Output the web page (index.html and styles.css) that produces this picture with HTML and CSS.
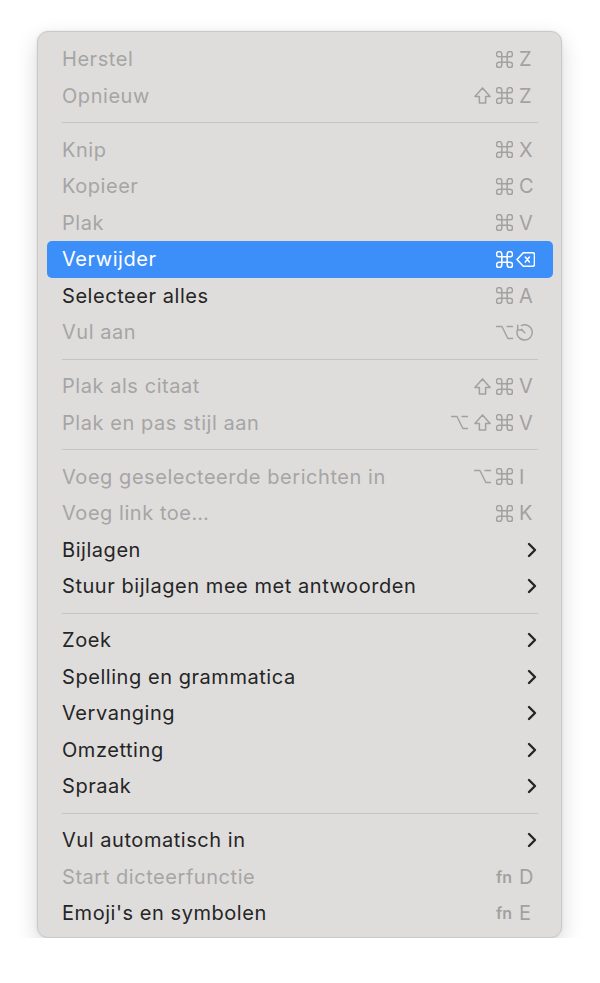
FILE: index.html
```html
<!DOCTYPE html>
<html lang="nl">
<head>
<meta charset="utf-8">
<title>Menu</title>
<link rel="stylesheet" href="styles.css">
</head>
<body>
<svg width="0" height="0" class="defs" aria-hidden="true">
  <defs>
    <symbol id="cmd" viewBox="2.5 2.5 19 19"><path d="M15 6v12a3 3 0 1 0 3-3H6a3 3 0 1 0 3 3V6a3 3 0 1 0-3 3h12a3 3 0 1 0-3-3"/></symbol>
    <symbol id="shift" viewBox="2.5 2.5 19 19"><path d="M8.5 20.5v-7.5H3.5l8.5-9.5 8.5 9.5h-5v7.5z"/></symbol>
    <symbol id="opt" viewBox="1.5 2.5 20 19"><path d="M2 5h6.5l7 14H21M14.5 5H21"/></symbol>
    <symbol id="del" viewBox="1.5 2.5 21 19"><path d="M9.5 4.5H20a2 2 0 0 1 2 2v11a2 2 0 0 1-2 2H9.5L2.5 12z"/><path d="M11.8 9.2l4.6 5.6M16.4 9.2l-4.6 5.6"/></symbol>
    <symbol id="hist" viewBox="2 2 20 20"><path d="M8.2 3.8A9 9 0 1 1 3.6 9"/><path d="M4 3.5v5.5h5.5"/><path d="M12.3 12.3L8.3 8.3"/></symbol>
    <symbol id="chev" viewBox="0 0 10 16"><path d="M2 2l6 6-6 6"/></symbol>
  </defs>
</svg>
<div class="menu">
  <div class="item off"><span class="label">Herstel</span><span class="keys"><span class="mods"><svg class="ic"><use href="#cmd"/></svg></span><span class="k">Z</span></span></div>
  <div class="item off"><span class="label">Opnieuw</span><span class="keys"><span class="mods"><svg class="ic"><use href="#shift"/></svg><svg class="ic"><use href="#cmd"/></svg></span><span class="k">Z</span></span></div>
  <div class="sep"></div>
  <div class="item off"><span class="label">Knip</span><span class="keys"><span class="mods"><svg class="ic"><use href="#cmd"/></svg></span><span class="k">X</span></span></div>
  <div class="item off"><span class="label">Kopieer</span><span class="keys"><span class="mods"><svg class="ic"><use href="#cmd"/></svg></span><span class="k">C</span></span></div>
  <div class="item off"><span class="label">Plak</span><span class="keys"><span class="mods"><svg class="ic"><use href="#cmd"/></svg></span><span class="k">V</span></span></div>
  <div class="item active"><span class="label">Verwijder</span><span class="keys"><span class="mods"><svg class="ic"><use href="#cmd"/></svg></span><span class="k"><svg class="ic wide keyic"><use href="#del"/></svg></span></span></div>
  <div class="item"><span class="label">Selecteer alles</span><span class="keys"><span class="mods"><svg class="ic"><use href="#cmd"/></svg></span><span class="k">A</span></span></div>
  <div class="item off"><span class="label">Vul aan</span><span class="keys"><span class="mods"><svg class="ic"><use href="#opt"/></svg></span><span class="k"><svg class="ic keyic"><use href="#hist"/></svg></span></span></div>
  <div class="sep"></div>
  <div class="item off"><span class="label">Plak als citaat</span><span class="keys"><span class="mods"><svg class="ic"><use href="#shift"/></svg><svg class="ic"><use href="#cmd"/></svg></span><span class="k">V</span></span></div>
  <div class="item off"><span class="label">Plak en pas stijl aan</span><span class="keys"><span class="mods"><svg class="ic"><use href="#opt"/></svg><svg class="ic"><use href="#shift"/></svg><svg class="ic"><use href="#cmd"/></svg></span><span class="k">V</span></span></div>
  <div class="sep"></div>
  <div class="item off"><span class="label">Voeg geselecteerde berichten in</span><span class="keys"><span class="mods"><svg class="ic"><use href="#opt"/></svg><svg class="ic"><use href="#cmd"/></svg></span><span class="k">I</span></span></div>
  <div class="item off"><span class="label">Voeg link toe…</span><span class="keys"><span class="mods"><svg class="ic"><use href="#cmd"/></svg></span><span class="k">K</span></span></div>
  <div class="item"><span class="label">Bijlagen</span><svg class="chev"><use href="#chev"/></svg></div>
  <div class="item"><span class="label">Stuur bijlagen mee met antwoorden</span><svg class="chev"><use href="#chev"/></svg></div>
  <div class="sep"></div>
  <div class="item"><span class="label">Zoek</span><svg class="chev"><use href="#chev"/></svg></div>
  <div class="item"><span class="label">Spelling en grammatica</span><svg class="chev"><use href="#chev"/></svg></div>
  <div class="item"><span class="label">Vervanging</span><svg class="chev"><use href="#chev"/></svg></div>
  <div class="item"><span class="label">Omzetting</span><svg class="chev"><use href="#chev"/></svg></div>
  <div class="item"><span class="label">Spraak</span><svg class="chev"><use href="#chev"/></svg></div>
  <div class="sep"></div>
  <div class="item"><span class="label">Vul automatisch in</span><svg class="chev"><use href="#chev"/></svg></div>
  <div class="item off"><span class="label">Start dicteerfunctie</span><span class="keys"><span class="mods"><span class="fn">fn</span></span><span class="k">D</span></span></div>
  <div class="item"><span class="label">Emoji's en symbolen</span><span class="keys"><span class="mods"><span class="fn">fn</span></span><span class="k">E</span></span></div>
</div>
</body>
</html>
```

FILE: styles.css
```css
html, body {
  margin: 0;
  padding: 0;
  background: #ffffff;
}

body {
  padding: 31px 0 0 37px;
  font-family: Inter, "Noto Sans", "Liberation Sans", sans-serif;
}

.defs {
  position: absolute;
  width: 0;
  height: 0;
  overflow: hidden;
}

.menu {
  box-sizing: border-box;
  width: 525px;
  height: 907px;
  padding: 9px 8px 6px 9px;
  background: #dedddc;
  border: 1px solid #c9c9c9;
  border-radius: 11px;
  box-shadow: 0 8px 22px rgba(0, 0, 0, 0.16), 0 0 3px rgba(0, 0, 0, 0.08);
}

.item {
  height: 36.5px;
  display: flex;
  align-items: center;
  justify-content: space-between;
  padding: 0 16px 0 15px;
  border-radius: 5px;
  color: #252525;
  font-size: 20px;
  letter-spacing: 0.55px;
}

.item.off {
  color: #a6a5a4;
}

.item.active {
  background: #3c8ff9;
  color: #ffffff;
}

.keys {
  display: flex;
  align-items: center;
  margin-right: 1px;
  color: #a2a1a0;
  letter-spacing: 0;
}

.item.active .keys {
  color: #ffffff;
}

.mods {
  display: flex;
  align-items: center;
  justify-content: flex-end;
  gap: 5.5px;
}

.ic {
  display: block;
  width: 17px;
  height: 17px;
  fill: none;
  stroke: currentColor;
  stroke-width: 1.7;
  stroke-linecap: round;
  stroke-linejoin: round;
}

.ic.wide {
  width: 19px;
}

.keyic {
  margin-left: -3px;
}

.k {
  display: flex;
  align-items: center;
  width: 17px;
  margin-left: 6px;
  font-size: 20px;
}

.fn {
  font-size: 16px;
  font-weight: 600;
  margin-right: 1px;
}

.chev {
  width: 10px;
  height: 16px;
  fill: none;
  stroke: #262626;
  stroke-width: 2.4;
  stroke-linecap: round;
  stroke-linejoin: round;
}

.sep {
  height: 1px;
  margin: 8px 15px 8.5px 15px;
  background: #c5c4c3;
}
```
